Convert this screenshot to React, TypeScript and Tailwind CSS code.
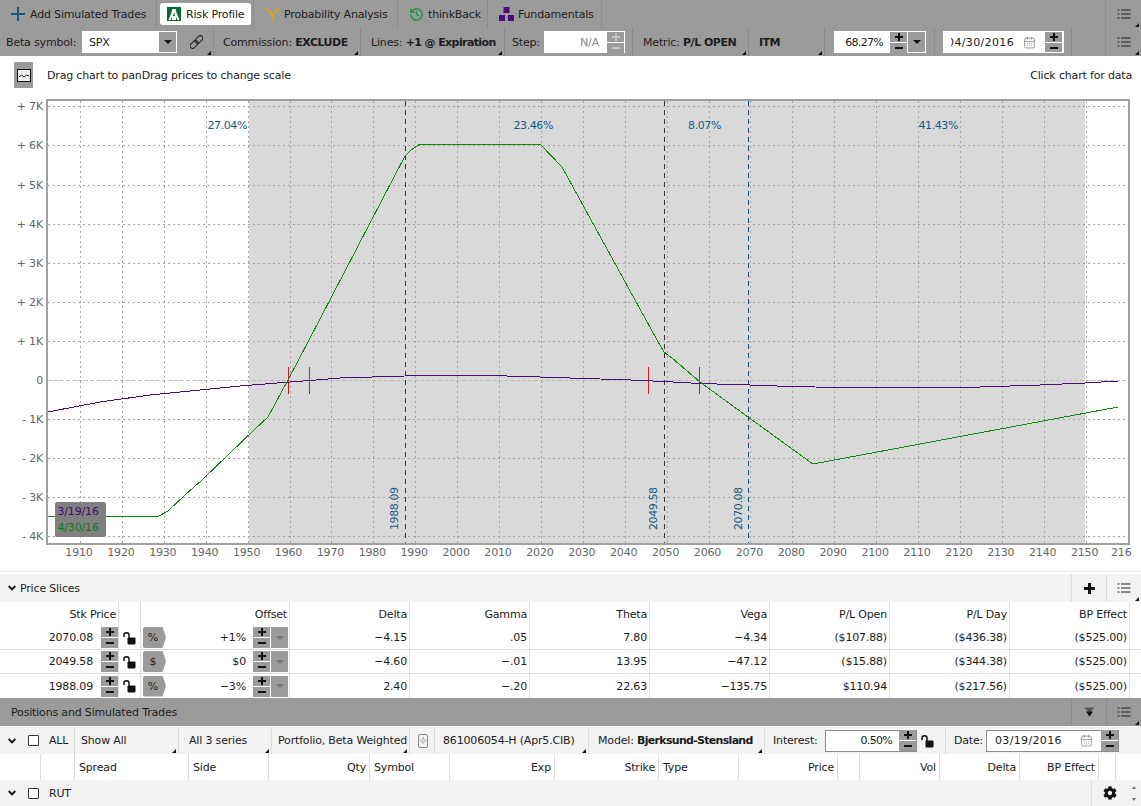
import React from "react";
import { History, CalendarDays, Zap } from "lucide-react";
import { FaCog } from "react-icons/fa";

const Corner = () => (
  <span className="absolute right-[2px] bottom-[1px] w-0 h-0 border-l-[4px] border-l-transparent border-b-[4px] border-b-[#111]" />
);

const Stepper = ({ off = false }: { off?: boolean }) => (
  <div className="w-[17px] h-[21px] flex flex-col gap-[1px] shrink-0">
    {[0, 1].map((i) => (
      <div key={i} className="h-[10px] bg-[#9b9b9b] flex items-center justify-center">
        <svg width="8" height="8" viewBox="0 0 8 8">
          {i === 0 && <rect x="3" y="0" width="2" height="8" fill={off ? "#c4c4c4" : "#111"} />}
          <rect x="0" y="3" width="8" height="2" fill={off ? "#c4c4c4" : "#111"} />
        </svg>
      </div>
    ))}
  </div>
);

const ListIcon = () => (
  <svg width="14" height="12" viewBox="0 0 14 12">
    {[1.5, 5.5, 9.5].map((y) => (
      <g key={y} fill="#222">
        <rect x="0.5" y={y} width="2" height="1" />
        <rect x="4" y={y} width="9.5" height="1" />
      </g>
    ))}
  </svg>
);

const Lock = () => (
  <svg width="13" height="14" viewBox="0 0 13 14">
    <path d="M1 6 V4 C1 1 6 1 6 4 V7" fill="none" stroke="#111" strokeWidth="1.5" />
    <rect x="4.5" y="6.5" width="8" height="7" rx="1" fill="#111" />
  </svg>
);

const Chevron = () => (
  <svg width="8" height="6" viewBox="0 0 8 6">
    <polyline points="0.7,1 4,4.4 7.3,1" fill="none" stroke="#111" strokeWidth="1.8" />
  </svg>
);

const Check = () => <div className="w-[11px] h-[11px] border border-[#333] rounded-[1px] bg-white shrink-0" />;

const TabCell = ({ w, children }: { w: string; children: React.ReactNode }) => (
  <div className={`${w} h-full flex items-center border-r border-[#8c8c8c] shrink-0`}>{children}</div>
);

const rows = [
  ["2070.08", "%", "+1%", "−4.15", ".05", "7.80", "−4.34", "($107.88)", "($436.38)", "($525.00)"],
  ["2049.58", "$", "$0", "−4.60", "−.01", "13.95", "−47.12", "($15.88)", "($344.38)", "($525.00)"],
  ["1988.09", "%", "−3%", "2.40", "−.20", "22.63", "−135.75", "$110.94", "($217.56)", "($525.00)"],
];

const yLabels: [string, number][] = [
  ["+ 7K", 7], ["+ 6K", 6], ["+ 5K", 5], ["+ 4K", 4], ["+ 3K", 3], ["+ 2K", 2], ["+ 1K", 1],
  ["0", 0], ["- 1K", -1], ["- 2K", -2], ["- 3K", -3], ["- 4K", -4],
];
const yOf = (k: number) => 380 - 39.1 * k;
const xTicks = Array.from({ length: 25 }, (_, i) => 1910 + i * 10);
const xOf = (p: number) => 80 + (p - 1910) * 4.19;

const green =
  "48,516 159,516 168,511 185,495 202,480 255,429 268,417 288,380 309,340 405,156 411,150 420,144 540,144 562,167 657,340 664,352 672,358 700,382 748,417 813,464 1118,407";
const purple =
  "48,412 100,402 150,395 200,390 240,386 290,382 310,380.5 340,378 405,376 430,375.5 490,375.5 540,377 600,379 620,379.5 664,381.5 700,383.5 750,385 790,386.5 840,387.5 950,388 1040,385 1085,383 1118,381";

const Chart = () => (
  <svg className="block shrink-0" width="1141" height="478" viewBox="0 96 1141 478" fontFamily="'DejaVu Sans', sans-serif" fontSize="11">
    <rect x="48" y="101" width="1080" height="442" fill="#fff" />
    <rect x="249" y="101" width="836" height="442" fill="#d9d9d9" />
    <g stroke="#a3a3a3" strokeWidth="1" strokeDasharray="2 3" shapeRendering="crispEdges">
      {yLabels.filter(([, k]) => k !== 0).map(([, k]) => (
        <line key={k} x1="48" x2="1128" y1={Math.round(yOf(k))} y2={Math.round(yOf(k))} />
      ))}
      {xTicks.map((p) => (
        <line key={p} x1={Math.round(xOf(p))} x2={Math.round(xOf(p))} y1="101" y2="543" />
      ))}
    </g>
    <line x1="48" x2="1128" y1="380.5" y2="380.5" stroke="#bdbdbd" strokeWidth="1.5" strokeDasharray="4 2" shapeRendering="crispEdges" />
    <rect x="47" y="100" width="1082" height="444" fill="none" stroke="#a0a0a0" strokeWidth="2" shapeRendering="crispEdges" />
    <g strokeWidth="1" strokeDasharray="5 4" shapeRendering="crispEdges">
      <line x1="405" x2="405" y1="101" y2="543" stroke="#333" />
      <line x1="664" x2="664" y1="101" y2="543" stroke="#333" />
      <line x1="748" x2="748" y1="101" y2="543" stroke="#0c5279" />
    </g>
    <g stroke="#e0181c" strokeWidth="1" shapeRendering="crispEdges">
      <line x1="288" x2="288" y1="367" y2="394" />
      <line x1="309" x2="309" y1="367" y2="394" />
      <line x1="648" x2="648" y1="367" y2="394" />
      <line x1="699" x2="699" y1="367" y2="394" />
    </g>
    <polyline points={purple} fill="none" stroke="#4b0a78" strokeWidth="1" shapeRendering="crispEdges" />
    <polyline points={green} fill="none" stroke="#0e8a0e" strokeWidth="1" shapeRendering="crispEdges" />
    <g fill="#0f5c85" letterSpacing="-0.4">
      <text x="247" y="129" textAnchor="end">27.04%</text>
      <text x="553" y="129" textAnchor="end">23.46%</text>
      <text x="721" y="129" textAnchor="end">8.07%</text>
      <text x="958" y="129" textAnchor="end">41.43%</text>
      <text transform="translate(398,530) rotate(-90)">1988.09</text>
      <text transform="translate(657,530) rotate(-90)">2049.58</text>
      <text transform="translate(742,530) rotate(-90)">2070.08</text>
    </g>
    <g fill="#666">
      {yLabels.map(([l, k]) => (
        <text key={l} x="43" y={yOf(k) + 4} textAnchor="end">{l}</text>
      ))}
      {xTicks.map((p) => (
        <text key={p} x={xOf(p) - 1} y="556" textAnchor="middle">{p}</text>
      ))}
      <text x="1111" y="556">216</text>
    </g>
    <rect x="55" y="502" width="51" height="35" rx="2" fill="#808080" />
    <text x="57.5" y="515" fill="#3f0a6b">3/19/16</text>
    <text x="57.5" y="531" fill="#0e7a0e">4/30/16</text>
    <line x1="0" x2="1141" y1="571.5" y2="571.5" stroke="#ececec" />
  </svg>
);

const ColHead = ({ w, label, left }: { w: string; label?: string; left?: boolean }) => (
  <div className={`${w} h-full shrink-0 flex items-center border-r border-[#dcdcdc] ${left ? "justify-start pl-1" : "justify-end pr-[3px]"}`}>
    {label}
  </div>
);

export default function App() {
  return (
    <div className="w-[1141px] h-[806px] overflow-hidden bg-white flex flex-col text-[11px] tracking-[-0.17px] text-[#1c1c1c] font-['DejaVu_Sans',sans-serif] leading-none">
      {/* Tabs */}
      <div className="h-[28px] bg-[#9b9b9b] flex items-center shrink-0">
        <TabCell w="w-[157px]">
          <svg className="ml-[11px] mr-[5px]" width="14" height="14" viewBox="0 0 14 14">
            <rect x="6" y="0" width="2" height="14" fill="#17567d" />
            <rect x="0" y="6" width="14" height="2" fill="#17567d" />
          </svg>
          <span>Add Simulated Trades</span>
        </TabCell>
        <TabCell w="w-[97px]">
          <div className="ml-[3px] w-[91px] h-[22px] bg-white rounded-[3px] flex items-center">
            <svg className="ml-[7px] mr-[5px]" width="14" height="14" viewBox="0 0 14 14">
              <rect width="14" height="14" fill="#0b6a34" />
              <path d="M1.5 13 L3.5 13 L5 10 L5 13 L9 13 L9 10 L10.5 13 L12.5 13 L10 7 L8.5 2 H5.5 L4 7 Z M6 9 L7 5 L8 9 Z" fill="#fff" fillRule="evenodd" />
            </svg>
            <span>Risk Profile</span>
          </div>
        </TabCell>
        <TabCell w="w-[144px]">
          <svg className="ml-[11px] mr-[4px]" width="15" height="15" viewBox="0 0 15 15">
            <path d="M1 1.5 L7.5 7.5 L14 1.5 M7.5 7.5 V14.5" fill="none" stroke="#d9a520" strokeWidth="2" />
          </svg>
          <span>Probability Analysis</span>
        </TabCell>
        <TabCell w="w-[90px]">
          <History className="ml-[11px] mr-[4px]" size={15} color="#12963a" strokeWidth={2} />
          <span>thinkBack</span>
        </TabCell>
        <TabCell w="w-[114px]">
          <svg className="ml-[11px] mr-[4px]" width="15" height="14" viewBox="0 0 15 14">
            <rect x="4.5" y="0" width="6" height="6" fill="#4b0f7c" />
            <rect x="0" y="8" width="6" height="6" fill="#4b0f7c" />
            <rect x="9" y="8" width="6" height="6" fill="#4b0f7c" />
          </svg>
          <span>Fundamentals</span>
        </TabCell>
        <div className="flex-1 h-full border-r border-[#8c8c8c]" />
        <div className="w-[35px] h-full flex items-center justify-center relative">
          <ListIcon />
          <Corner />
        </div>
      </div>

      {/* Settings bar */}
      <div className="h-[28px] bg-[#9b9b9b] flex items-center shrink-0 whitespace-nowrap">
        <div className="w-[214px] h-full flex items-center border-r border-[#8c8c8c] relative shrink-0 pl-[6px]">
          <span className="w-[67px]">Beta symbol:</span>
          <div className="ml-[9px] w-[95px] h-[22px] bg-white flex items-center justify-between pl-[6px] border border-white">
            <span>SPX</span>
            <div className="w-[17px] h-full bg-[#9b9b9b] flex items-center justify-center">
              <span className="w-0 h-0 border-x-[4px] border-x-transparent border-t-[4px] border-t-[#111]" />
            </div>
          </div>
          <svg className="ml-[13px]" width="13" height="14" viewBox="0 0 13 14">
            <g transform="rotate(45 6.5 7)" fill="none" stroke="#222" strokeWidth="1.1">
              <rect x="4" y="-1" width="5" height="9" rx="2.5" />
              <rect x="4" y="6" width="5" height="9" rx="2.5" />
            </g>
          </svg>
          <Corner />
        </div>
        <div className="w-[147px] h-full flex items-center border-r border-[#8c8c8c] relative shrink-0 pl-[9px]">
          <span>Commission: <b className="tracking-[-0.5px]">EXCLUDE</b></span>
          <Corner />
        </div>
        <div className="w-[144px] h-full flex items-center border-r border-[#8c8c8c] relative shrink-0 pl-[10px]">
          <span>Lines: <b className="tracking-[-0.6px]">+1 @ Expiration</b></span>
          <Corner />
        </div>
        <div className="w-[128px] h-full flex items-center border-r border-[#8c8c8c] shrink-0 pl-[7px]">
          <span className="w-[26px]">Step:</span>
          <div className="ml-[6px] w-[81px] h-[22px] bg-white flex items-center justify-end border border-white">
            <span className="text-[#888] mr-[8px]">N/A</span>
            <Stepper off />
          </div>
        </div>
        <div className="w-[116px] h-full flex items-center border-r border-[#8c8c8c] relative shrink-0 pl-[10px]">
          <span>Metric: <b className="tracking-[-0.5px]">P/L OPEN</b></span>
          <Corner />
        </div>
        <div className="w-[76px] h-full flex items-center border-r border-[#8c8c8c] relative shrink-0 pl-[10px]">
          <b className="tracking-[-0.5px]">ITM</b>
          <Corner />
        </div>
        <div className="w-[110px] h-full flex items-center border-r border-[#8c8c8c] shrink-0 pl-[9px]">
          <div className="w-[92px] h-[22px] bg-white flex items-center justify-end gap-[1px] border border-white">
            <span className="mr-[6px] tracking-[-0.7px]">68.27%</span>
            <Stepper />
            <div className="w-[17px] h-full bg-[#9b9b9b] flex items-center justify-center">
              <span className="w-0 h-0 border-x-[4px] border-x-transparent border-t-[4px] border-t-[#111]" />
            </div>
          </div>
        </div>
        <div className="w-[137px] h-full flex items-center border-r border-[#8c8c8c] shrink-0 pl-[8px]">
          <div className="w-[121px] h-[22px] bg-white flex items-center border border-white overflow-hidden">
            <span className="ml-[7px] w-[63px] overflow-hidden flex justify-end whitespace-nowrap tracking-[0.35px]">04/30/2016</span>
            <CalendarDays className="ml-[9px] mr-[9px]" size={13} color="#888" strokeWidth={1.5} />
            <Stepper />
          </div>
        </div>
        <div className="w-[34px] h-full border-r border-[#8c8c8c] shrink-0" />
        <div className="flex-1 h-full flex items-center justify-center relative">
          <ListIcon />
          <Corner />
        </div>
      </div>

      {/* Chart header */}
      <div className="h-[40px] flex items-start justify-between shrink-0 pl-[14px] pr-[9px] pt-[6px]">
        <div className="flex items-center">
          <div className="w-[19px] h-[26px] bg-[#9b9b9b] flex items-center justify-center">
            <svg width="14" height="13" viewBox="0 0 14 13">
              <rect x="0.5" y="0.5" width="13" height="12" fill="#f2f2f2" stroke="#111" />
              <path d="M2 8 L4.5 6 L7 8 L9.5 6 L12 7" fill="none" stroke="#111" strokeWidth="1" />
            </svg>
          </div>
          <span className="ml-[14px]">Drag chart to panDrag prices to change scale</span>
        </div>
        <span className="mt-[8px]">Click chart for data</span>
      </div>

      <Chart />

      {/* Price Slices */}
      <div className="h-[28px] bg-[#f3f3f3] flex items-center shrink-0">
        <div className="ml-[8px] mr-[4px] flex"><Chevron /></div>
        <span>Price Slices</span>
        <div className="flex-1" />
        <div className="w-[35px] h-full border-l border-[#dcdcdc] flex items-center justify-center">
          <svg width="11" height="11" viewBox="0 0 11 11">
            <rect x="4" y="0" width="3" height="11" fill="#111" />
            <rect x="0" y="4" width="11" height="3" fill="#111" />
          </svg>
        </div>
        <div className="w-[35px] h-full border-l border-[#dcdcdc] flex items-center justify-center relative">
          <ListIcon />
          <Corner />
        </div>
      </div>
      <div className="h-[24px] grid grid-cols-[119px_22px_149px_repeat(7,120px)_1fr] items-stretch shrink-0">
        {["Stk Price", "", "Offset", "Delta", "Gamma", "Theta", "Vega", "P/L Open", "P/L Day", "BP Effect"].map((h, i) => (
          <div key={i} className="flex items-center justify-end pr-[2px] border-r border-[#dcdcdc]">{h}</div>
        ))}
      </div>
      {rows.map((r, idx) => (
        <div key={idx} className={`h-[24px] grid grid-cols-[119px_22px_149px_repeat(7,120px)_1fr] shrink-0 ${idx < 2 ? "border-b border-[#dcdcdc]" : ""}`}>
          <div className="flex items-center justify-end border-r border-[#dcdcdc]">
            <span className="mr-[8px]">{r[0]}</span>
            <Stepper />
          </div>
          <div className="flex items-center justify-center border-r border-[#dcdcdc]"><Lock /></div>
          <div className="flex items-center border-r border-[#dcdcdc] pl-[2px]">
            <div className="w-[23px] h-[21px] bg-[#9b9b9b] flex items-center justify-center pr-[3px] rounded-l-[2px] [clip-path:polygon(0_0,85%_0,100%_50%,85%_100%,0_100%)]">{r[1]}</div>
            <span className="flex-1 text-right pr-[7px]">{r[2]}</span>
            <Stepper />
            <div className="ml-[1px] mr-[1px] w-[17px] h-[21px] bg-[#9b9b9b] flex items-center justify-center">
              <span className="w-0 h-0 border-x-[4px] border-x-transparent border-t-[4px] border-t-[#777]" />
            </div>
          </div>
          {r.slice(3).map((c, i) => (
            <div key={i} className="flex items-center justify-end pr-[2px] border-r border-[#dcdcdc]">{c}</div>
          ))}
        </div>
      ))}

      {/* Positions */}
      <div className="h-[28px] bg-[#9b9b9b] flex items-center shrink-0">
        <span className="ml-[11px]">Positions and Simulated Trades</span>
        <div className="flex-1" />
        <div className="w-[35px] h-full border-l border-[#8c8c8c] flex items-center justify-center">
          <svg width="11" height="10" viewBox="0 0 11 10">
            <path d="M0.5 0.5 H10.5 L5.5 6 Z" fill="#555" />
            <path d="M2 4.5 H9 L5.5 9.5 Z" fill="#111" />
          </svg>
        </div>
        <div className="w-[35px] h-full border-l border-[#8c8c8c] flex items-center justify-center relative">
          <ListIcon />
          <Corner />
        </div>
      </div>
      <div className="h-[27px] mt-[1px] bg-[#f3f3f3] flex items-center shrink-0 whitespace-nowrap">
        <div className="w-[75px] h-full flex items-center border-r border-[#dcdcdc] shrink-0">
          <div className="ml-[8px] flex"><Chevron /></div>
          <div className="ml-[12px]"><Check /></div>
          <span className="ml-[10px]">ALL</span>
        </div>
        <div className="w-[104px] h-full flex items-center border-r border-[#dcdcdc] relative shrink-0 pl-[6px]">Show All<Corner /></div>
        <div className="w-[93px] h-full flex items-center border-r border-[#dcdcdc] relative shrink-0 pl-[10px]">All 3 series<Corner /></div>
        <div className="w-[138px] h-full flex items-center border-r border-[#dcdcdc] relative shrink-0 pl-[6px]">Portfolio, Beta Weighted<Corner /></div>
        <div className="w-[25px] h-full flex items-center border-r border-[#dcdcdc] shrink-0 pl-[8px]">
          <div className="w-[10px] h-[14px] border border-[#888] rounded-[2px] flex items-center justify-center">
            <Zap size={9} color="#777" strokeWidth={1.5} />
          </div>
        </div>
        <div className="w-[154px] h-full flex items-center border-r border-[#dcdcdc] relative shrink-0 pl-[8px]">861006054-H (Apr5.CIB)<Corner /></div>
        <div className="w-[176px] h-full flex items-center border-r border-[#dcdcdc] relative shrink-0 pl-[9px]"><span>Model: <b className="tracking-[-0.7px]">Bjerksund-Stensland</b></span><Corner /></div>
        <div className="w-[181px] h-full flex items-center border-r border-[#dcdcdc] shrink-0 pl-[8px]">
          <span className="w-[44px]">Interest:</span>
          <div className="ml-[8px] w-[92px] h-[22px] bg-white border border-[#8c8c8c] flex items-center justify-end">
            <span className="mr-[7px] tracking-[-0.7px]">0.50%</span>
            <Stepper />
          </div>
          <div className="ml-[4px] flex"><Lock /></div>
        </div>
        <div className="flex-1 h-full flex items-center pl-[8px]">
          <span className="w-[27px]">Date:</span>
          <div className="ml-[5px] w-[133px] h-[22px] bg-white border border-[#8c8c8c] flex items-center">
            <span className="ml-[8px] tracking-[0.35px]">03/19/2016</span>
            <CalendarDays className="ml-auto mr-[8px]" size={13} color="#888" strokeWidth={1.5} />
            <Stepper />
          </div>
        </div>
      </div>
      <div className="h-[26px] flex items-center shrink-0">
        <ColHead w="w-[41px]" />
        <ColHead w="w-[34px]" />
        <ColHead w="w-[114px]" label="Spread" left />
        <ColHead w="w-[80px]" label="Side" left />
        <ColHead w="w-[101px]" label="Qty" />
        <ColHead w="w-[80px]" label="Symbol" left />
        <ColHead w="w-[105px]" label="Exp" />
        <ColHead w="w-[104px]" label="Strike" />
        <ColHead w="w-[80px]" label="Type" left />
        <ColHead w="w-[99px]" label="Price" />
        <ColHead w="w-[22px]" />
        <ColHead w="w-[80px]" label="Vol" />
        <ColHead w="w-[80px]" label="Delta" />
        <ColHead w="w-[79px]" label="BP Effect" />
        <ColHead w="w-[17px]" />
      </div>
      <div className="flex-1 bg-[#f3f3f3] flex items-center">
        <div className="ml-[8px] flex"><Chevron /></div>
        <div className="ml-[12px]"><Check /></div>
        <span className="ml-[10px]">RUT</span>
        <div className="flex-1" />
        <div className="w-[36px] h-full border-l border-[#dcdcdc] flex items-center justify-center">
          <FaCog size={14} color="#111" />
        </div>
        <div className="w-[14px] h-full flex flex-col items-center justify-center gap-[9px]">
          <span className="w-0 h-0 border-x-[2.5px] border-x-transparent border-b-[3px] border-b-[#777]" />
          <span className="w-0 h-0 border-x-[2.5px] border-x-transparent border-t-[3px] border-t-[#777]" />
        </div>
      </div>
    </div>
  );
}
